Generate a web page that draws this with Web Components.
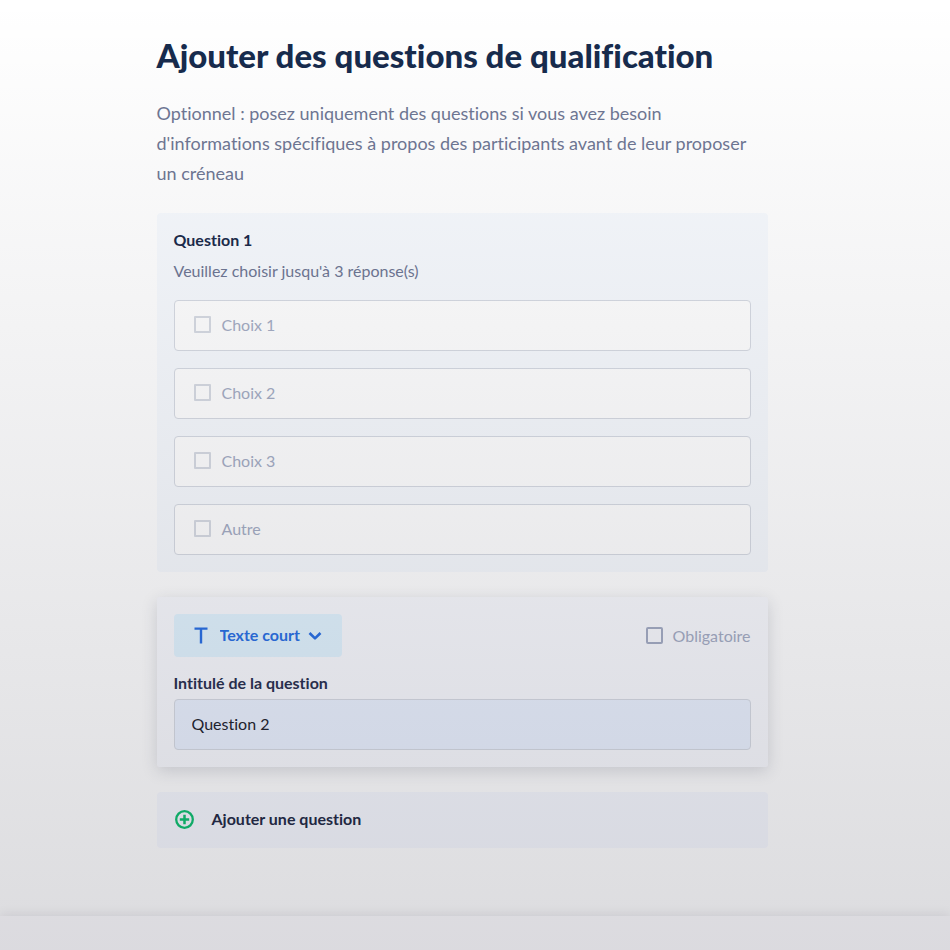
<!DOCTYPE html>
<html lang="fr">
<head>
<meta charset="utf-8">
<meta name="viewport" content="width=device-width, initial-scale=1">
<title>Ajouter des questions de qualification</title>
<style>
body { margin: 0; font: 16px/24px Lato, "Open Sans", sans-serif; font-variant-ligatures: none; color: #1b2b4b; background: #fff; }
</style>
</head>
<body>
<survey-page>
  <page-intro>
    <span slot="title">Ajouter des questions de qualification</span>
    Optionnel : posez uniquement des questions si vous avez besoin d'informations spécifiques à propos des participants avant de leur proposer un créneau
  </page-intro>
  <question-preview>
    <span slot="title">Question 1</span>
    <span slot="hint">Veuillez choisir jusqu'à 3 réponse(s)</span>
    <choice-option>Choix 1</choice-option>
    <choice-option>Choix 2</choice-option>
    <choice-option>Choix 3</choice-option>
    <choice-option>Autre</choice-option>
  </question-preview>
  <question-editor value="Question 2">
    <type-select slot="type"></type-select>
    <check-field slot="required">Obligatoire</check-field>
    <span slot="label">Intitulé de la question</span>
  </question-editor>
  <add-question>Ajouter une question</add-question>
</survey-page>
<script>
function define(name, markup, setup) {
  customElements.define(name, class extends HTMLElement {
    constructor() {
      super();
      this.attachShadow({ mode: 'open' }).innerHTML =
        '<style>*{box-sizing:border-box}:host{display:block}</style>' + markup;
    }
    connectedCallback() { if (setup) setup(this, this.shadowRoot); }
  });
}

define('survey-page', `
<style>
:host { position: relative; display: flex; flex-direction: column; min-height: 100vh; }
.shade { position: absolute; inset: 0; z-index: 2; pointer-events: none; background: linear-gradient(rgba(20,20,40,0), rgba(20,20,40,.15)); }
.area { flex: 1; padding: 34px 26px 67px 0; }
main { max-width: 611px; margin: 0 auto; display: flex; flex-direction: column; gap: 25px; }
footer { height: 34px; background: #fefdff; box-shadow: 0 -2px 10px rgba(30,20,60,.09); }
</style>
<div class="area"><main><slot></slot></main></div>
<footer></footer>
<div class="shade"></div>`);

define('page-intro', `
<style>
h1 { margin: 0 0 22px; font-size: 33px; line-height: 42px; font-weight: 900; color: #172b4d; }
p { margin: 0; font-size: 18px; line-height: 30px; color: #6f7794; }
</style>
<h1><slot name="title"></slot></h1>
<p><slot></slot></p>`);

define('question-preview', `
<style>
section { padding: 15px 17px 17px; background: #f7fafe; border-radius: 4px; }
h2 { margin: 0; font-size: 16px; line-height: 24px; font-weight: 700; }
p { margin: 7px 0 17px; color: #6f7794; }
.list { display: flex; flex-direction: column; gap: 17px; }
</style>
<section>
  <h2><slot name="title"></slot></h2>
  <p><slot name="hint"></slot></p>
  <div class="list"><slot></slot></div>
</section>`);

define('choice-option', `
<style>
label { display: flex; align-items: center; gap: 11px; height: 51px; padding: 0 19px 2px; border: 1px solid #d7dbe3; border-radius: 4px; background: #fff; color: #a5adc4; }
input { appearance: none; margin: 0; width: 17px; height: 17px; border: 2px solid #d7dbe3; border-radius: 1px; }
</style>
<label><input type="checkbox"><span><slot></slot></span></label>`);

define('check-field', `
<style>
label { display: flex; align-items: center; gap: 10px; color: #a5adc4; }
input { appearance: none; margin: 0; width: 17px; height: 17px; border: 2px solid #a5adc4; border-radius: 2px; }
</style>
<label><input type="checkbox"><span><slot></slot></span></label>`);

define('type-select', `
<style>
.box { display: grid; align-items: center; color: #2a70e4; background: #e2f4ff; border-radius: 4px; }
.box > * { grid-area: 1 / 1; }
select { appearance: none; height: 43px; padding: 0 41px 2px 46px; margin: 0; border: 0; background: transparent; font: inherit; font-variant-ligatures: none; font-weight: 700; color: inherit; }
svg { pointer-events: none; fill: none; stroke: currentColor; }
.kind { margin-left: 20px; }
.arrow { justify-self: end; margin-right: 20px; }
</style>
<div class="box">
  <select aria-label="Type de question"><option>Texte court</option></select>
  <svg class="kind" width="14" height="17" viewBox="0 0 14 17" stroke-width="2.4"><path d="M.5 1.6h13M7 1.6V16.5"/></svg>
  <svg class="arrow" width="14" height="10" viewBox="0 0 14 10" stroke-width="2.6" stroke-linejoin="round"><path d="M1.5 2l5.5 5.4L12.5 2"/></svg>
</div>`);

define('question-editor', `
<style>
section { padding: 17px; background: #f9fafe; box-shadow: 0 4px 16px rgba(40,45,70,.17); border-radius: 2px; }
.top { display: flex; justify-content: space-between; align-items: center; margin-bottom: 14px; }
label { display: block; margin-bottom: 4px; font-weight: 700; color: #2a3150; }
input { display: block; width: 100%; height: 51px; padding: 0 17px 2px; border: 1px solid #d7dbe3; border-radius: 4px; background: #ebf2ff; font: inherit; font-variant-ligatures: none; color: #22242e; }
</style>
<section>
  <div class="top"><slot name="type"></slot><slot name="required"></slot></div>
  <label for="q"><slot name="label"></slot></label>
  <input id="q" type="text">
</section>`, (host, root) => { root.querySelector('input').value = host.getAttribute('value') || ''; });

define('add-question', `
<style>
button { display: flex; align-items: center; gap: 17px; width: 100%; height: 56px; padding: 0 17px 2px; border: 0; border-radius: 4px; background: #f7f9ff; font: inherit; font-variant-ligatures: none; font-weight: 700; color: #232a45; }
svg { fill: none; stroke: #0fc070; }
</style>
<button type="button">
  <svg width="21" height="21" viewBox="0 0 21 21" stroke-width="2.3"><circle cx="10.5" cy="10.5" r="8.3"/><path stroke-width="2.5" d="M10.5 5.8v9.4M5.8 10.5h9.4"/></svg>
  <span><slot></slot></span>
</button>`);
</script>
</body>
</html>
